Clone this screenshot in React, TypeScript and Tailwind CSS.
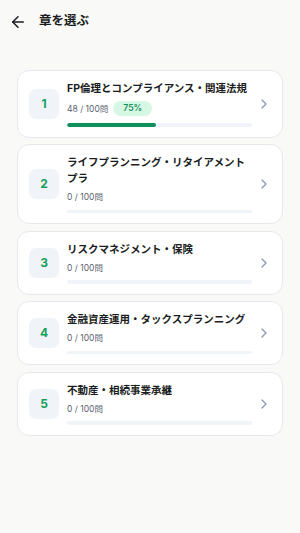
import React from "react";
import { ArrowLeft, ChevronRight } from "lucide-react";

type Chapter = { no: number; title: string; done: number; total: number };

const chapters: Chapter[] = [
  { no: 1, title: "FP倫理とコンプライアンス・関連法規", done: 48, total: 100 },
  { no: 2, title: "ライフプランニング・リタイアメントプラ", done: 0, total: 100 },
  { no: 3, title: "リスクマネジメント・保険", done: 0, total: 100 },
  { no: 4, title: "金融資産運用・タックスプランニング", done: 0, total: 100 },
  { no: 5, title: "不動産・相続事業承継", done: 0, total: 100 },
];

const badges: Record<number, string> = { 1: "75%" };

function Card({ c }: { c: Chapter }) {
  const pct = (c.done / c.total) * 100;
  const badge = badges[c.no];
  return (
    <div className="flex items-center rounded-[12px] border border-[#e6e8ec] bg-white pl-[11px] pr-[10px] py-[10px]">
      <div className="flex h-[30px] w-[30px] shrink-0 items-center justify-center rounded-[7px] bg-[#f0f3f8] text-[12px] font-bold text-[#16a05a]">
        {c.no}
      </div>
      <div className="ml-[8px] flex w-[185px] flex-col">
        <div className="text-[10.5px] font-bold leading-[16px] text-[#1a1d21]">{c.title}</div>
        <div className={`mt-[4px] flex items-center gap-[5px] ${badge ? "h-[16px]" : "h-[12px]"}`}>
          <span className="text-[8.5px] leading-[12px] text-[#5b6470]">
            {c.done} / {c.total}問
          </span>
          {badge && (
            <span className="flex h-[15.5px] items-center rounded-full bg-[#d7f7e5] px-[10px] text-[8.5px] font-semibold text-[#17905a]">
              {badge}
            </span>
          )}
        </div>
        <div className="mt-[6.5px] h-[3.5px] w-full overflow-hidden rounded-full bg-[#f0f3f8]">
          <div className="h-full rounded-full bg-[#0e8f5e]" style={{ width: `${pct}%` }} />
        </div>
      </div>
      <div className="ml-[4px] flex h-[16px] w-[16px] items-center justify-center text-[#8c9ab0]">
        <ChevronRight size={16} strokeWidth={2} />
      </div>
    </div>
  );
}

export default function App() {
  return (
    <div
      className="min-h-[533px] w-full bg-[#f9f9f7]"
      style={{ fontFamily: '"Inter", "Noto Sans CJK JP", sans-serif' }}
    >
      <div className="flex h-[43px] items-center gap-[12px] px-[9px]">
        <ArrowLeft size={18} strokeWidth={2} className="text-[#1a1d21]" />
        <span className="text-[12.5px] font-bold text-[#1a1d21]">章を選ぶ</span>
      </div>
      <div className="flex flex-col gap-[6.5px] px-[17px] pt-[26.5px]">
        {chapters.map((c) => (
          <Card key={c.no} c={c} />
        ))}
      </div>
    </div>
  );
}
